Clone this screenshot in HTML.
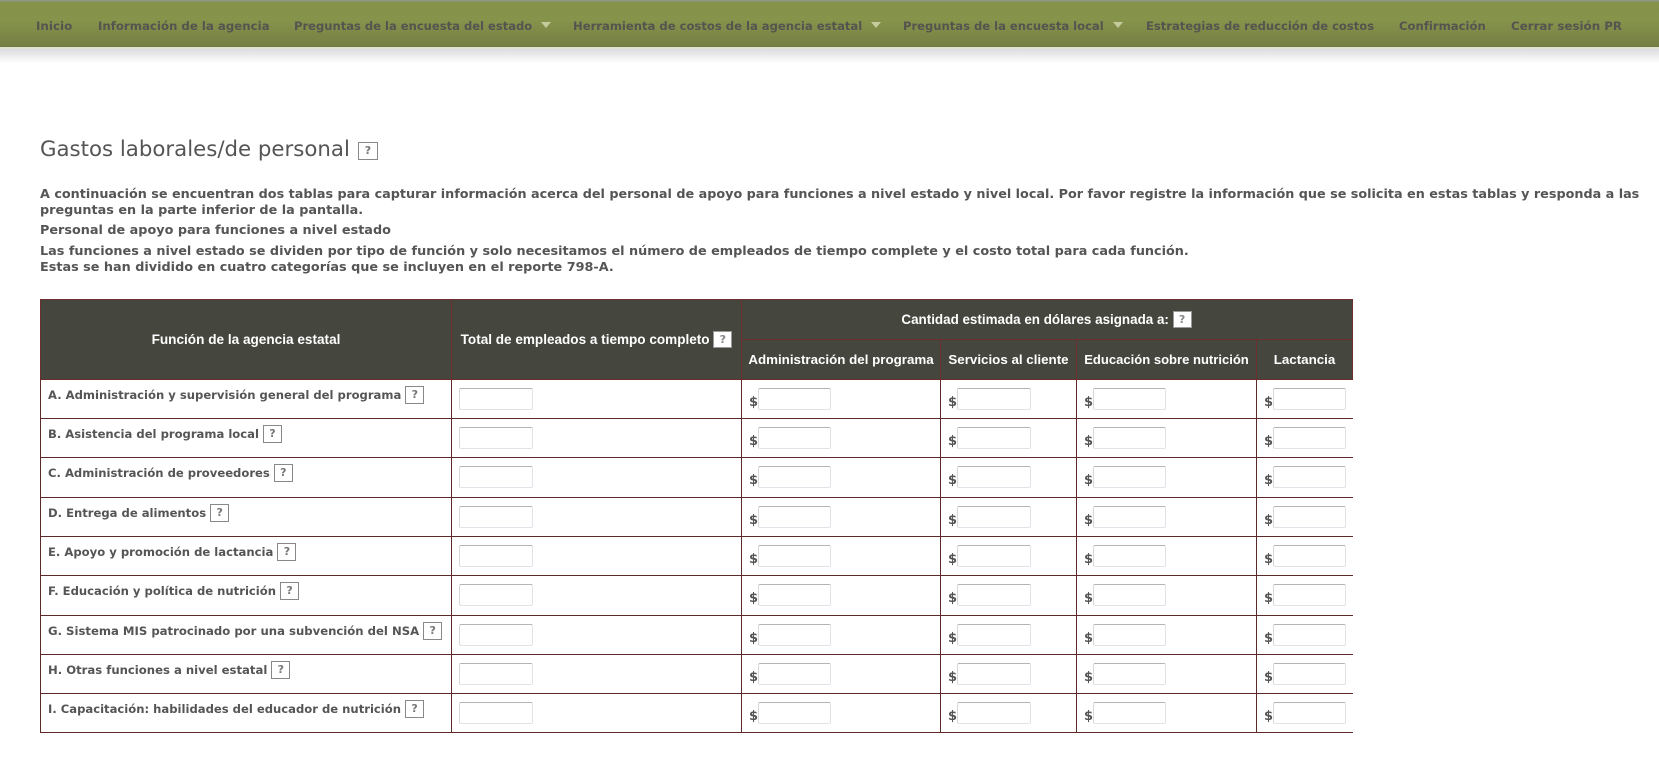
<!DOCTYPE html>
<html lang="es"><head><meta charset="utf-8"><title>Gastos laborales</title>
<style>
html,body{margin:0;padding:0;background:#fff;width:1659px;height:757px;overflow:hidden}
body{position:relative;font-family:"DejaVu Sans","Liberation Sans",sans-serif;color:#555}
#nav{position:absolute;left:0;top:0;width:1659px;height:47px;background:linear-gradient(#8f9888 0,#8f9888 1px,#84924a 2px,#86934b 20px,#757f44 46px,#6f7a40 47px)}
#line{position:absolute;left:0;top:47px;width:1659px;height:2px;background:#e3e3d4}
#shadow{position:absolute;left:0;top:49px;width:1659px;height:14px;background:linear-gradient(#dcdce0,#fff)}
.n{position:absolute;top:19px;font-size:11.6px;font-weight:bold;line-height:15px;color:#55544f;white-space:nowrap}
.a{position:absolute;top:22px;width:0;height:0;border-left:5.5px solid transparent;border-right:5.5px solid transparent;border-top:6px solid #c5cb9d}
.q{display:inline-block;box-sizing:border-box;width:19px;height:18px;border:1px solid #888;background:#fff;color:#777;font:bold 11px/16px "DejaVu Sans",sans-serif;text-align:center;vertical-align:1px}
h1{position:absolute;left:40px;top:136px;margin:0;font-size:21.3px;font-weight:normal;line-height:28px;color:#555;white-space:nowrap}
h1 .q{position:absolute;left:318px;top:6px;width:20px;height:18px}
.p{position:absolute;left:40px;font-size:12.8px;font-weight:bold;line-height:16px;color:#555;white-space:nowrap}
table{position:absolute;left:40px;top:299px;width:1312px;border-collapse:collapse;table-layout:fixed}
th{background:#45463e;color:#fff;font:bold 13.35px/17px "Liberation Sans",sans-serif;border:1px solid #6b2f2f;padding:0;text-align:center;white-space:nowrap}
th .q{height:17px;border-color:#999;color:#888;font-size:11px;line-height:15px;vertical-align:top}
td{border:1px solid #5e2b2b;padding:0;position:relative;font-size:11.6px;font-weight:bold;color:#555;white-space:nowrap}
td.l{padding-left:7px;vertical-align:top}
td.l div{margin-top:5px;line-height:20px}
td.r{border-right:0}
i{position:absolute;left:7px;top:15px;font-style:normal;font-size:13px;line-height:16px}
b{position:absolute;left:16px;top:8px;box-sizing:border-box;width:73px;height:22px;border:1px solid #e0e3e8;border-top-color:#b4b4b4;border-left-color:#d8d8d8;border-radius:2px;background:#fff}
b.f{left:7px;width:74px}
td:nth-child(4) b{width:74px}
</style></head><body>
<div id="nav"></div><div id="line"></div><div id="shadow"></div>
<span class="n" style="left:36px;font-size:11.9px">Inicio</span>
<span class="n" style="left:98px;font-size:11.75px">Información de la agencia</span>
<span class="n" style="left:294px;font-size:11.55px">Preguntas de la encuesta del estado</span><span class="a" style="left:541px"></span>
<span class="n" style="left:573px">Herramienta de costos de la agencia estatal</span><span class="a" style="left:871px"></span>
<span class="n" style="left:903px;font-size:11.57px">Preguntas de la encuesta local</span><span class="a" style="left:1113px"></span>
<span class="n" style="left:1146px;font-size:11.56px">Estrategias de reducción de costos</span>
<span class="n" style="left:1399px;font-size:11.65px">Confirmación</span>
<span class="n" style="left:1511px;font-size:11.85px">Cerrar sesión PR</span>

<h1>Gastos laborales/de personal <span class="q">?</span></h1>
<div class="p" style="top:187px;font-size:12.785px">A continuación se encuentran dos tablas para capturar información acerca del personal de apoyo para funciones a nivel estado y nivel local. Por favor registre la información que se solicita en estas tablas y responda a las</div>
<div class="p" style="top:203px">preguntas en la parte inferior de la pantalla.</div>
<div class="p" style="top:223px">Personal de apoyo para funciones a nivel estado</div>
<div class="p" style="top:244px;font-size:12.81px">Las funciones a nivel estado se dividen por tipo de función y solo necesitamos el número de empleados de tiempo complete y el costo total para cada función.</div>
<div class="p" style="top:260px;font-size:12.81px">Estas se han dividido en cuatro categorías que se incluyen en el reporte 798-A.</div>

<table>
<colgroup><col style="width:411px"><col style="width:290px"><col style="width:199px"><col style="width:136px"><col style="width:180px"><col style="width:96px"></colgroup>
<tr style="height:40px"><th rowspan="2" style="font-size:13.6px">Función de la agencia estatal</th><th rowspan="2" style="font-size:13.55px">Total de empleados a tiempo completo <span class="q">?</span></th><th colspan="4" style="font-size:13.42px;padding-right:1px">Cantidad estimada en dólares asignada a: <span class="q">?</span></th></tr>
<tr style="height:40px"><th>Administración del programa</th><th>Servicios al cliente</th><th style="font-size:13.05px">Educación sobre nutrición</th><th>Lactancia</th></tr>
<tr style="height:39px"><td class="l"><div>A. Administración y supervisión general del programa <span class="q">?</span></div></td><td><b class="f"></b></td><td><i>$</i><b></b></td><td><i>$</i><b></b></td><td><i>$</i><b></b></td><td class="r"><i>$</i><b></b></td></tr>
<tr style="height:39px"><td class="l"><div>B. Asistencia del programa local <span class="q">?</span></div></td><td><b class="f"></b></td><td><i>$</i><b></b></td><td><i>$</i><b></b></td><td><i>$</i><b></b></td><td class="r"><i>$</i><b></b></td></tr>
<tr style="height:40px"><td class="l"><div>C. Administración de proveedores <span class="q">?</span></div></td><td><b class="f"></b></td><td><i>$</i><b></b></td><td><i>$</i><b></b></td><td><i>$</i><b></b></td><td class="r"><i>$</i><b></b></td></tr>
<tr style="height:39px"><td class="l"><div>D. Entrega de alimentos <span class="q">?</span></div></td><td><b class="f"></b></td><td><i>$</i><b></b></td><td><i>$</i><b></b></td><td><i>$</i><b></b></td><td class="r"><i>$</i><b></b></td></tr>
<tr style="height:39px"><td class="l"><div style="font-size:11.62px">E. Apoyo y promoción de lactancia <span class="q">?</span></div></td><td><b class="f"></b></td><td><i>$</i><b></b></td><td><i>$</i><b></b></td><td><i>$</i><b></b></td><td class="r"><i>$</i><b></b></td></tr>
<tr style="height:40px"><td class="l"><div>F. Educación y política de nutrición <span class="q">?</span></div></td><td><b class="f"></b></td><td><i>$</i><b></b></td><td><i>$</i><b></b></td><td><i>$</i><b></b></td><td class="r"><i>$</i><b></b></td></tr>
<tr style="height:39px"><td class="l"><div style="font-size:11.67px">G. Sistema MIS patrocinado por una subvención del NSA <span class="q">?</span></div></td><td><b class="f"></b></td><td><i>$</i><b></b></td><td><i>$</i><b></b></td><td><i>$</i><b></b></td><td class="r"><i>$</i><b></b></td></tr>
<tr style="height:39px"><td class="l"><div style="font-size:11.65px">H. Otras funciones a nivel estatal <span class="q">?</span></div></td><td><b class="f"></b></td><td><i>$</i><b></b></td><td><i>$</i><b></b></td><td><i>$</i><b></b></td><td class="r"><i>$</i><b></b></td></tr>
<tr style="height:39px"><td class="l"><div>I. Capacitación: habilidades del educador de nutrición <span class="q">?</span></div></td><td><b class="f"></b></td><td><i>$</i><b></b></td><td><i>$</i><b></b></td><td><i>$</i><b></b></td><td class="r"><i>$</i><b></b></td></tr>
</table>
</body></html>
